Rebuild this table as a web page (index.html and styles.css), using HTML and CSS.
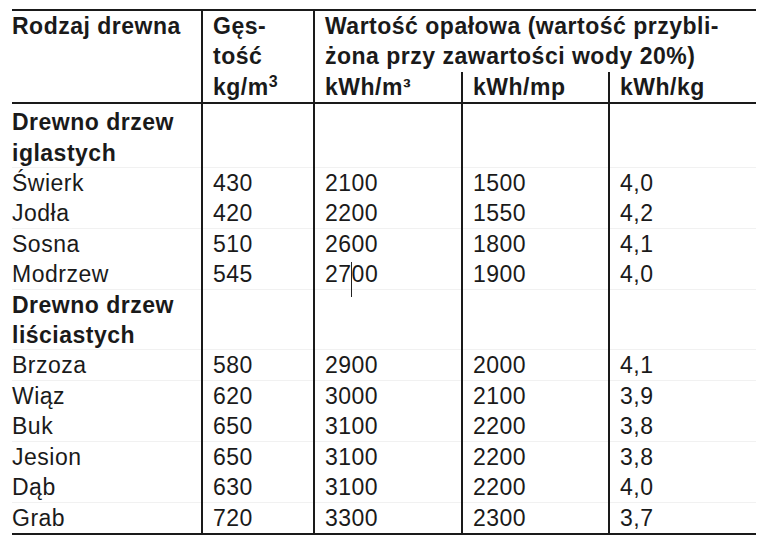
FILE: index.html
```html
<!DOCTYPE html>
<html lang="pl">
<head>
<meta charset="utf-8">
<title>Wartość opałowa drewna</title>
<link rel="stylesheet" href="styles.css">
</head>
<body>
<table class="wood">
  <colgroup>
    <col class="c1"><col class="c2"><col class="c3"><col class="c4"><col class="c5">
  </colgroup>
  <thead>
    <tr>
      <th rowspan="2" class="first">Rodzaj drewna</th>
      <th rowspan="2" class="vl">Gęs-<br>tość<br>kg/m<sup class="sup">3</sup></th>
      <th colspan="3" class="vl">Wartość opałowa (wartość przybli-<br>żona przy zawartości wody 20%)</th>
    </tr>
    <tr>
      <th class="vl">kWh/m³</th>
      <th class="vl">kWh/mp</th>
      <th class="vl">kWh/kg</th>
    </tr>
  </thead>
  <tbody>
    <tr class="grp top sep">
      <td class="first"><b>Drewno drzew<br>iglastych</b></td><td class="vl"></td><td class="vl"></td><td class="vl"></td><td class="vl"></td>
    </tr>
    <tr><td class="first">Świerk</td><td class="vl">430</td><td class="vl">2100</td><td class="vl">1500</td><td class="vl">4,0</td></tr>
    <tr class="sep"><td class="first">Jodła</td><td class="vl">420</td><td class="vl">2200</td><td class="vl">1550</td><td class="vl">4,2</td></tr>
    <tr><td class="first">Sosna</td><td class="vl">510</td><td class="vl">2600</td><td class="vl">1800</td><td class="vl">4,1</td></tr>
    <tr class="sep"><td class="first">Modrzew</td><td class="vl">545</td><td class="vl">27<span class="caret"></span>00</td><td class="vl">1900</td><td class="vl">4,0</td></tr>
    <tr class="grp sep">
      <td class="first"><b>Drewno drzew<br>liściastych</b></td><td class="vl"></td><td class="vl"></td><td class="vl"></td><td class="vl"></td>
    </tr>
    <tr class="sep"><td class="first">Brzoza</td><td class="vl">580</td><td class="vl">2900</td><td class="vl">2000</td><td class="vl">4,1</td></tr>
    <tr><td class="first">Wiąz</td><td class="vl">620</td><td class="vl">3000</td><td class="vl">2100</td><td class="vl">3,9</td></tr>
    <tr class="sep"><td class="first">Buk</td><td class="vl">650</td><td class="vl">3100</td><td class="vl">2200</td><td class="vl">3,8</td></tr>
    <tr><td class="first">Jesion</td><td class="vl">650</td><td class="vl">3100</td><td class="vl">2200</td><td class="vl">3,8</td></tr>
    <tr class="sep"><td class="first">Dąb</td><td class="vl">630</td><td class="vl">3100</td><td class="vl">2200</td><td class="vl">4,0</td></tr>
    <tr class="last"><td class="first">Grab</td><td class="vl">720</td><td class="vl">3300</td><td class="vl">2300</td><td class="vl">3,7</td></tr>
  </tbody>
</table>
</body>
</html>
```

FILE: styles.css
```css
html, body {
  margin: 0;
  padding: 0;
  background: #ffffff;
}

body {
  font-family: "Liberation Sans", Arial, sans-serif;
  font-size: 23px;
  letter-spacing: 0.5px;
  color: #1a1a1a;
}

.wood {
  margin: 9px 0 0 12px;
  width: 744px;
  border-collapse: collapse;
  table-layout: fixed;
  border-top: 2px solid #1a1a1a;
  border-bottom: 2px solid #1a1a1a;
}

.c1 { width: 190px; }
.c2 { width: 112px; }
.c3 { width: 148px; }
.c4 { width: 147px; }
.c5 { width: 147px; }

.wood th,
.wood td {
  padding: 0 0 0 10px;
  line-height: 30.4px;
  text-align: left;
  vertical-align: top;
  white-space: nowrap;
}

.wood th {
  font-weight: bold;
}

.wood thead tr:last-child th,
.wood thead th[rowspan] {
  border-bottom: 2px solid #1a1a1a;
}

.wood .first {
  padding-left: 0;
}

.wood .vl {
  border-left: 2px solid #1a1a1a;
}

.wood b {
  font-weight: bold;
}

.sup {
  font-size: 16px;
  line-height: 0;
  vertical-align: 8px;
  letter-spacing: 0;
}

.wood tr.top td {
  padding-top: 3px;
}

.wood tr.sep td {
  box-shadow: inset 0 -1px 0 #f1f1f1;
}

.caret {
  position: relative;
  display: inline-block;
  width: 0;
  height: 0;
}

.caret::after {
  content: "";
  position: absolute;
  left: -1px;
  top: -20px;
  width: 1px;
  height: 35px;
  background: #222;
}
```
